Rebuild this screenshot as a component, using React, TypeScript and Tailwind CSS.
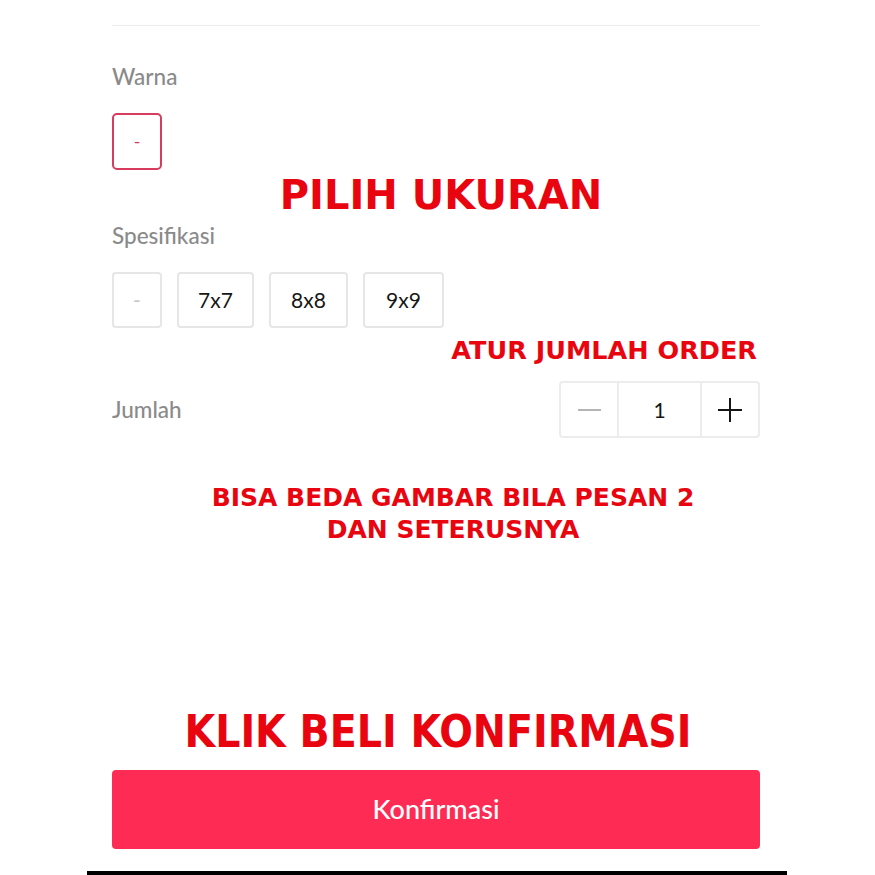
const labelFont = { fontFamily: 'Lato, "Open Sans", sans-serif' };

const sizes = [
  { label: '-', w: 'w-[50px]', muted: true },
  { label: '7x7', w: 'w-[77px]' },
  { label: '8x8', w: 'w-[79px]' },
  { label: '9x9', w: 'w-[81px]' },
];

export default function App() {
  return (
    <div className="w-[875px] h-[875px] bg-white overflow-hidden" style={labelFont}>
      <div className="ml-[112px] w-[648px] pt-[25px] flex flex-col">
        <div className="h-px bg-[#ececec]" />

        <div className="mt-[39px] text-[22.5px] leading-[24px] font-medium text-[#8a8a8a]">Warna</div>
        <div className="mt-[24px] w-[50px] h-[57px] rounded-[5px] border-2 border-[#d93b5e] flex items-center justify-center text-[18px] text-[#d93b5e]">
          -
        </div>

        <div
          className="mt-[5px] pl-[10px] text-center text-[40px] leading-[40px] font-bold text-[#e8050f]"
          style={{ fontFamily: '"DejaVu Sans", sans-serif' }}
        >
          PILIH UKURAN
        </div>

        <div className="mt-[9px] text-[22.5px] leading-[24px] font-medium text-[#8a8a8a]">Spesifikasi</div>
        <div className="mt-[24px] flex gap-[15px]">
          {sizes.map((s) => (
            <div
              key={s.label}
              className={`${s.w} h-[56px] rounded-[4px] border-2 border-[#e6e6e6] flex items-center justify-center text-[21px] ${
                s.muted ? 'text-[#c4c4c4]' : 'text-[#161616]'
              }`}
            >
              {s.label}
            </div>
          ))}
        </div>

        <div
          className="mt-[10px] pr-[3px] text-right text-[25.5px] leading-[24px] font-bold text-[#e8050f]"
          style={{ fontFamily: '"DejaVu Sans", sans-serif' }}
        >
          ATUR JUMLAH ORDER
        </div>

        <div className="mt-[19px] flex items-center justify-between">
          <span className="text-[22.5px] font-medium text-[#8a8a8a]">Jumlah</span>
          <div className="flex h-[57px] rounded-[4px] border-2 border-[#ececec]">
            <div className="w-[56px] flex items-center justify-center">
              <div className="w-[23px] h-[2px] bg-[#b5b5b5]" />
            </div>
            <div className="w-[85px] border-x-2 border-[#ececec] flex items-center justify-center text-[21px] text-[#161616]">
              1
            </div>
            <div className="w-[56px] flex items-center justify-center relative">
              <div className="w-[24px] h-[2px] bg-[#161616]" />
              <div className="absolute w-[2px] h-[24px] bg-[#161616]" />
            </div>
          </div>
        </div>

        <div
          className="mt-[44px] pl-[34px] text-center text-[25px] leading-[32px] font-bold text-[#e8050f]"
          style={{ fontFamily: '"DejaVu Sans", sans-serif' }}
        >
          BISA BEDA GAMBAR BILA PESAN 2
          <br />
          DAN SETERUSNYA
        </div>

        <div
          className="mt-[162px] pl-[4px] text-center text-[44px] leading-[48px] font-bold text-[#e8050f]"
          style={{ fontFamily: '"DejaVu Sans Condensed", "DejaVu Sans", sans-serif' }}
        >
          KLIK BELI KONFIRMASI
        </div>

        <button className="mt-[14px] h-[79px] rounded-[4px] bg-[#fe2c55] text-white text-[27px] font-medium">
          Konfirmasi
        </button>
      </div>
      <div className="mt-[22px] ml-[87px] w-[700px] h-[6px] bg-black" />
    </div>
  );
}
